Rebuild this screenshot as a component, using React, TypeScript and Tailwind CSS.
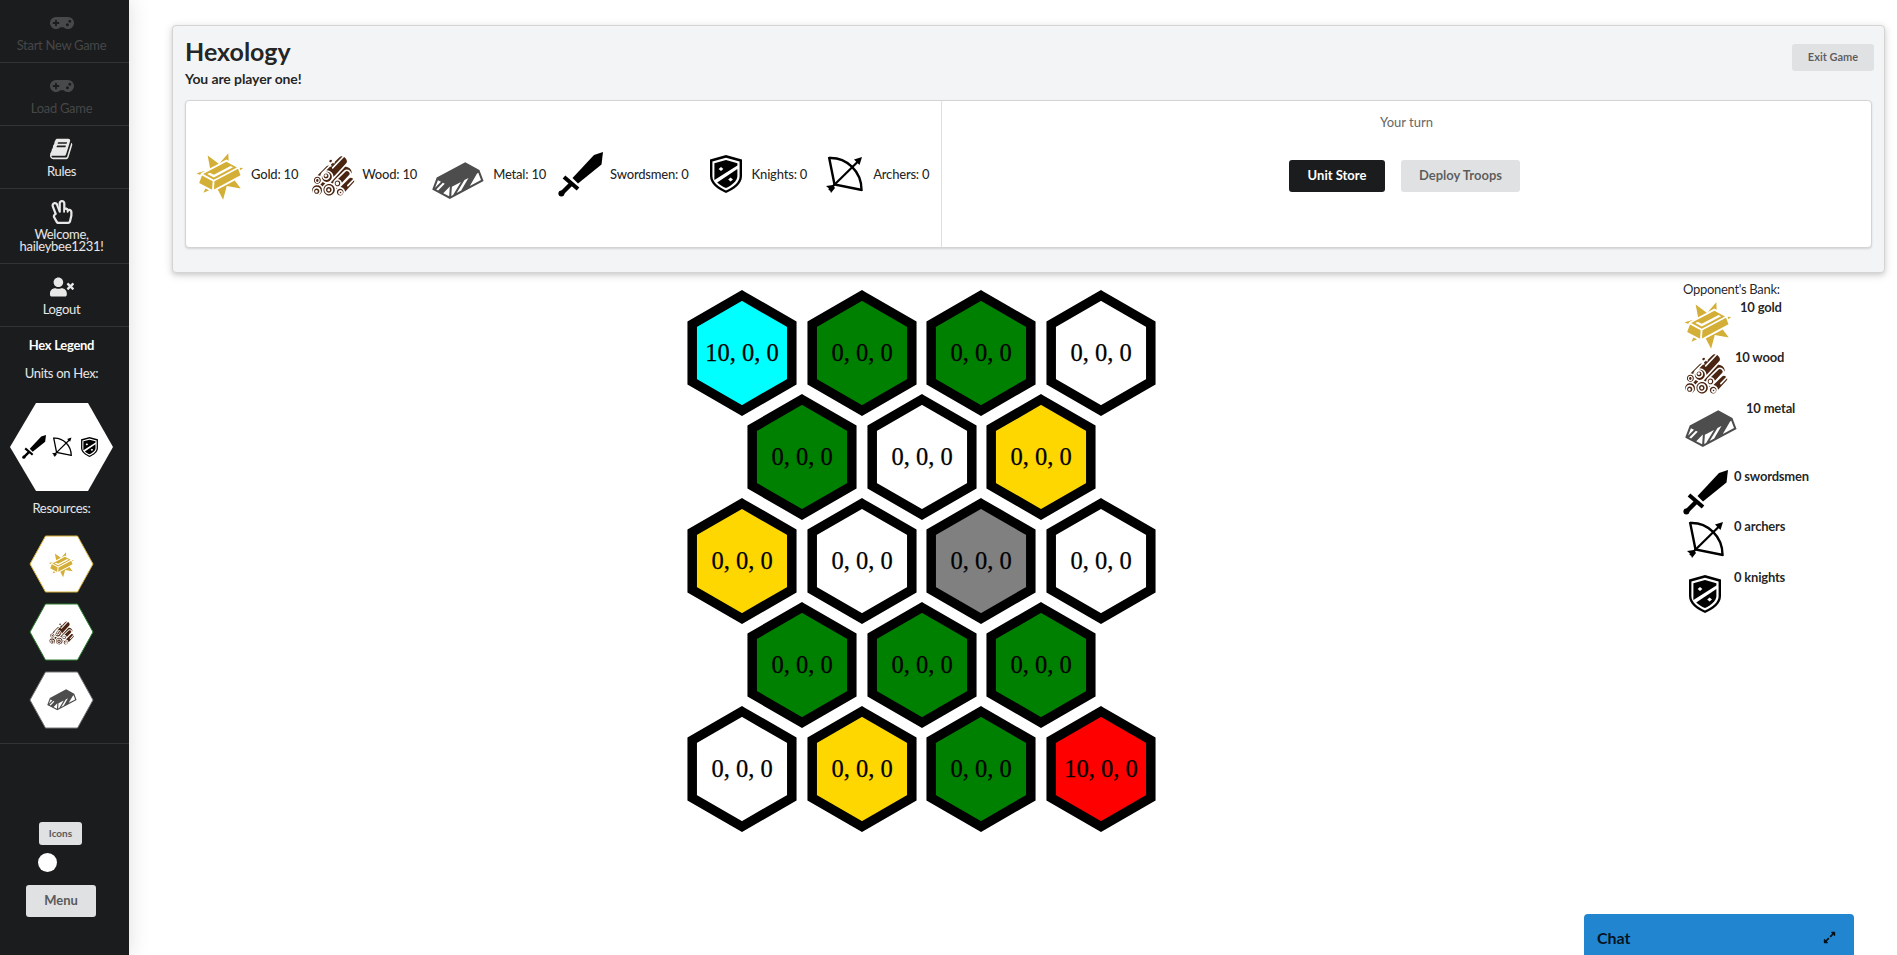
import { FaExpandAlt, FaGamepad, FaRegHandPeace, FaUserTimes } from 'react-icons/fa';
import { GiGoldBar, GiMetalBar, GiWoodPile } from 'react-icons/gi';

const GOLD = '#d4af37';
const WOOD = '#4a2511';
const METAL = '#4d4d4d';

function KnightShield({ className }: { className?: string }) {
  return (
    <svg viewBox="0 0 32 38" className={className}>
      <path d="M16 0 L32 4.5 V21 C32 29 24 34.5 16 38 C8 34.5 0 29 0 21 V4.5 Z" fill="#000" />
      <path d="M16 2.8 L29.6 6.6 V21 C29.6 27.6 23 32.4 16 35.4 C9 32.4 2.4 27.6 2.4 21 V6.6 Z" fill="#fff" />
      <path d="M16 5 L27.4 8.2 V10.6 L4.4 25 C4.2 23.8 4.4 22.4 4.4 21 V8.2 Z" fill="#000" />
      <path d="M27.4 14 V21 C27.4 26 22 30.2 16 33 C12.6 31.5 9.4 29.6 7.2 27.4 Z" fill="#000" />
      <path d="M11 12 L13.4 14 L11 16 L8.6 14 Z" fill="#fff" />
      <path d="M20.6 22.4 L23 24.4 L20.6 26.4 L18.2 24.4 Z" fill="#fff" />
    </svg>
  );
}

function Sword({ className }: { className?: string }) {
  return (
    <svg viewBox="0 0 45 45" className={className}>
      <path d="M45 0 L43.5 12.5 L20 31.5 L14.5 26 L36 3 Z" fill="#000" />
      <path d="M6 25 L20 37" stroke="#000" strokeWidth="4" />
      <path d="M13 32 L4 41" stroke="#000" strokeWidth="4.5" />
      <circle cx="3.4" cy="41.6" r="3" fill="#000" />
    </svg>
  );
}

function Bow({ className }: { className?: string }) {
  return (
    <svg viewBox="0 0 37 37" fill="none" stroke="#000" className={className}>
      <path d="M3 2 C20 1 36 15 35.5 35" strokeWidth="2.4" />
      <path d="M3 1 L8.5 28.5 L36 34" strokeWidth="2.4" />
      <path d="M3 34 L32 5.5" strokeWidth="2.2" />
      <path d="M36 1 L28 3.5 L33.5 9 Z" fill="#000" stroke="none" />
      <path d="M0 30 L7 29 L9 32 L5 37 L3.5 33 Z" fill="#000" stroke="none" />
    </svg>
  );
}

function BookIcon() {
  return (
    <svg viewBox="0 0 1792 1792" fill="currentColor" className="w-[24px] h-[24px]">
      <path d="M1639 478q40 57 18 129l-275 906q-19 64-76.5 107.5t-122.5 43.5h-923q-77 0-148.5-53.5t-99.5-131.5q-24-67-2-127 0-4 3-27t4-37q1-8-3-21.5t-3-19.5q2-11 8-21t16.5-23.5 16.5-23.5q23-38 45-91.5t30-91.5q3-10 .5-30t-.5-28q3-11 17-28t17-23q21-36 42-92t25-90q1-9-2.5-32t.5-28q4-13 22-30.5t22-22.5q19-26 42.5-84.5t27.5-96.5q1-8-3-25.5t-2-26.5q2-8 9-18t18-23 17-21q8-12 16.5-30.5t15-35 16-36 19.5-32 26.5-23.5 36-11.5 47.5 5.5l-1 3q38-9 51-9h761q74 0 114 56t18 130l-274 906q-36 119-71.5 153.5t-128.5 34.5h-869q-27 0-38 15-11 16-1 43 24 70 144 70h923q29 0 56-15.5t35-41.5l300-987q7-22 5-57 38 15 59 43zm-1064 2q-4 13 2 22.5t20 9.5h608q13 0 25.5-9.5t16.5-22.5l21-64q4-13-2-22.5t-20-9.5h-608q-13 0-25.5 9.5t-16.5 22.5zm-83 256q-4 13 2 22.5t20 9.5h608q13 0 25.5-9.5t16.5-22.5l21-64q4-13-2-22.5t-20-9.5h-608q-13 0-25.5 9.5t-16.5 22.5z" />
    </svg>
  );
}

function SideItem({ icon, label, disabled }: { icon: React.ReactNode; label: React.ReactNode; disabled?: boolean }) {
  return (
    <div className={`flex flex-col items-center border-b border-white/10 pt-[11px] pb-[11px] pr-[6px] text-center ${disabled ? 'text-white/20' : 'text-white/90'}`}>
      <div className="h-6 flex items-center text-[24px]">{icon}</div>
      <div className="mt-[4px] text-[13px] leading-[12px] tracking-[-0.3px]">{label}</div>
    </div>
  );
}

function LegendHex({ stroke, children }: { stroke: string; children: React.ReactNode }) {
  return (
    <div className="relative w-[65px] h-[58px] flex items-center justify-center">
      <svg viewBox="0 0 65 58" className="absolute inset-0 w-full h-full">
        <polygon points="16.5,1 48.5,1 64,29 48.5,57 16.5,57 1,29" fill="#fff" stroke={stroke} strokeWidth="1" />
      </svg>
      <div className="relative">{children}</div>
    </div>
  );
}

function Sidebar() {
  return (
    <div className="w-[129px] h-[955px] shrink-0 bg-[#1b1c1d] flex flex-col shadow-[0_0_20px_rgba(34,36,38,0.15)] z-10">
      <SideItem disabled icon={<FaGamepad />} label="Start New Game" />
      <SideItem disabled icon={<FaGamepad />} label="Load Game" />
      <SideItem icon={<BookIcon />} label="Rules" />
      <SideItem icon={<FaRegHandPeace />} label={<>Welcome,<br />haileybee1231!</>} />
      <SideItem icon={<FaUserTimes />} label="Logout" />
      <div className="flex flex-col items-center border-b border-white/10 pb-[14px] pr-[6px] text-white/90 text-[13px] leading-[14px] tracking-[-0.3px]">
        <div className="mt-[11px] font-bold text-white">Hex Legend</div>
        <div className="mt-[14px]">Units on Hex:</div>
        <div className="relative mt-[23px] w-[103px] h-[88px] flex items-center pl-[12px]">
          <svg viewBox="0 0 103 88" className="absolute inset-0 w-full h-full">
            <polygon points="26,0 78,0 103,44 78,88 26,88 0,44" fill="#fff" />
          </svg>
          <Sword className="relative w-[24px] h-[24px]" />
          <Bow className="relative ml-[6px] w-[20px] h-[20px]" />
          <KnightShield className="relative ml-[9px] w-[17px] h-[20px]" />
        </div>
        <div className="mt-[10px]">Resources:</div>
        <div className="mt-[20px] flex flex-col gap-[10px]">
          <LegendHex stroke="#d4af37"><GiGoldBar size={27} color={GOLD} /></LegendHex>
          <LegendHex stroke="#2e7d32"><GiWoodPile size={27} color={WOOD} /></LegendHex>
          <LegendHex stroke="#777777"><GiMetalBar size={32} color={METAL} /></LegendHex>
        </div>
      </div>
      <div className="flex flex-col items-center mt-[78px] pr-[6px]">
        <button className="w-[43px] h-[23px] rounded-[3px] bg-[#e0e1e2] text-[#5a5a5a] text-[10px] font-bold mr-[2px]">Icons</button>
        <div className="mt-[8px] w-[19px] h-[19px] rounded-full bg-white mr-[28px]" />
        <button className="mt-[13px] mr-[1px] w-[70px] h-[32px] rounded-[3px] bg-[#e0e1e2] text-[#5a5a5a] text-[13px] font-bold">Menu</button>
      </div>
    </div>
  );
}

const stats = [
  { icon: <GiGoldBar size={50} color={GOLD} className="mt-[4px]" />, item: 'mr-[12px]', label: 'ml-[6px]', text: 'Gold: 10' },
  { icon: <GiWoodPile size={46} color={WOOD} className="mt-[2px]" />, item: 'mr-[13px]', label: 'ml-[6px]', text: 'Wood: 10' },
  { icon: <GiMetalBar size={56} color={METAL} className="mt-[14px]" />, item: 'mr-[12px]', label: 'ml-[7px]', text: 'Metal: 10' },
  { icon: <Sword className="w-[45px] h-[45px]" />, item: 'mr-[21px]', label: 'ml-[7px]', text: 'Swordsmen: 0' },
  { icon: <KnightShield className="w-[32px] h-[38px]" />, item: 'mr-[19px]', label: 'ml-[10px]', text: 'Knights: 0' },
  { icon: <Bow className="w-[37px] h-[37px]" />, item: '', label: 'ml-[10px]', text: 'Archers: 0' },
];

function GamePanel() {
  return (
    <div className="mt-[25px] ml-[43px] mr-[12px] h-[248px] rounded-[4px] border border-[#d4d4d5] bg-[#f3f4f5] pl-[12px] pr-[10px] pt-[13px] shadow-[0_2px_4px_rgba(34,36,38,0.12),0_2px_10px_rgba(34,36,38,0.15)]">
      <div className="flex items-start justify-between">
        <div>
          <h2 className="text-[25px] leading-[24px] font-bold text-[rgba(0,0,0,0.87)]">Hexology</h2>
          <p className="mt-[9px] text-[14px] leading-[14px] font-bold tracking-[-0.1px] text-[rgba(0,0,0,0.87)]">You are player one!</p>
        </div>
        <button className="mt-[5px] w-[82px] h-[27px] rounded-[3px] bg-[#e0e1e2] text-[rgba(0,0,0,0.6)] text-[11px] font-bold">Exit Game</button>
      </div>
      <div className="mt-[14px] mr-[2px] h-[148px] flex rounded-[4px] border border-[#d4d4d5] bg-white shadow-[0_1px_2px_rgba(34,36,38,0.15)]">
        <div className="w-[756px] flex items-center pl-[9px] border-r border-[#dedede]">
          {stats.map((s) => (
            <div key={s.text} className={`flex items-center ${s.item}`}>
              {s.icon}
              <span className={`${s.label} mt-[2px] text-[13px] font-medium tracking-[-0.2px] text-[rgba(0,0,0,0.87)] whitespace-nowrap`}>{s.text}</span>
            </div>
          ))}
        </div>
        <div className="flex-1 flex flex-col items-center pt-[14px]">
          <div className="text-[13px] leading-[14px] font-medium text-[rgba(0,0,0,0.6)]">Your turn</div>
          <div className="mt-[31px] mr-[4px] flex gap-[16px]">
            <button className="w-[96px] h-[32px] rounded-[3px] bg-[#1b1c1d] text-white text-[13px] font-bold">Unit Store</button>
            <button className="w-[119px] h-[32px] rounded-[3px] bg-[#e0e1e2] text-[rgba(0,0,0,0.6)] text-[13px] font-bold">Deploy Troops</button>
          </div>
        </div>
      </div>
    </div>
  );
}

const rows: { fill: string; text: string }[][] = [
  [
    { fill: '#00ffff', text: '10, 0, 0' },
    { fill: '#008000', text: '0, 0, 0' },
    { fill: '#008000', text: '0, 0, 0' },
    { fill: '#ffffff', text: '0, 0, 0' },
  ],
  [
    { fill: '#008000', text: '0, 0, 0' },
    { fill: '#ffffff', text: '0, 0, 0' },
    { fill: '#ffd700', text: '0, 0, 0' },
  ],
  [
    { fill: '#ffd700', text: '0, 0, 0' },
    { fill: '#ffffff', text: '0, 0, 0' },
    { fill: '#808080', text: '0, 0, 0' },
    { fill: '#ffffff', text: '0, 0, 0' },
  ],
  [
    { fill: '#008000', text: '0, 0, 0' },
    { fill: '#008000', text: '0, 0, 0' },
    { fill: '#008000', text: '0, 0, 0' },
  ],
  [
    { fill: '#ffffff', text: '0, 0, 0' },
    { fill: '#ffd700', text: '0, 0, 0' },
    { fill: '#008000', text: '0, 0, 0' },
    { fill: '#ff0000', text: '10, 0, 0' },
  ],
];

function Hex({ fill, text }: { fill: string; text: string }) {
  return (
    <svg viewBox="0 0 110 126" className="w-[110px] h-[126px]">
      <polygon points="55,5.5 104.8,34.25 104.8,91.75 55,120.5 5.2,91.75 5.2,34.25" fill={fill} stroke="#000" strokeWidth="9.5" />
      <text x="55" y="71" textAnchor="middle" fontSize="24.5" fontFamily="'Liberation Serif', serif" fill="#000" stroke="#000" strokeWidth="0.25">{text}</text>
    </svg>
  );
}

function Board() {
  return (
    <div className="ml-[558px] w-[470px] flex flex-col">
      {rows.map((row, i) => (
        <div key={i} className={`flex gap-[9.5px] ${i % 2 ? 'ml-[60px]' : ''} ${i ? '-mt-[22px]' : ''}`}>
          {row.map((h, j) => <Hex key={j} {...h} />)}
        </div>
      ))}
    </div>
  );
}

function BankRow({ icon, text, textMl, h }: { icon: React.ReactNode; text: string; textMl: string; h: string }) {
  return (
    <div className={`flex items-start ${h}`}>
      {icon}
      <span className={`${textMl} text-[13px] leading-[14px] font-bold tracking-[-0.2px] text-[rgba(0,0,0,0.87)] whitespace-nowrap`}>{text}</span>
    </div>
  );
}

function OpponentBank() {
  return (
    <div className="ml-[526px] -mt-[8px] text-[rgba(0,0,0,0.87)]">
      <div className="text-[13px] leading-[14px] tracking-[-0.3px]">Opponent's Bank:</div>
      <BankRow h="h-[50px] mt-[4px]" textMl="ml-[7px]" icon={<GiGoldBar size={50} color={GOLD} />} text="10 gold" />
      <BankRow h="h-[51px]" textMl="ml-[6px]" icon={<GiWoodPile size={46} color={WOOD} />} text="10 wood" />
      <BankRow h="h-[68px]" textMl="ml-[7px]" icon={<GiMetalBar size={56} color={METAL} />} text="10 metal" />
      <BankRow h="h-[50px]" textMl="ml-[6px]" icon={<Sword className="w-[45px] h-[45px] mt-[1px]" />} text="0 swordsmen" />
      <BankRow h="h-[51px]" textMl="ml-[10px]" icon={<Bow className="w-[37px] h-[37px] ml-[4px] mt-[2px]" />} text="0 archers" />
      <BankRow h="h-[43px]" textMl="ml-[13px]" icon={<KnightShield className="w-[32px] h-[38px] ml-[6px] mt-[5px]" />} text="0 knights" />
    </div>
  );
}

export default function App() {
  return (
    <div className="relative flex h-[955px] overflow-hidden bg-white font-['Lato',sans-serif]">
      <Sidebar />
      <div className="flex-1 min-w-0">
        <GamePanel />
        <div className="flex mt-[17px]">
          <Board />
          <OpponentBank />
        </div>
      </div>
      <div className="absolute right-[43px] bottom-0 w-[270px] h-[41px] rounded-t-[4px] bg-[#2185d0] flex items-start justify-between pl-[13px] pr-[18px] pt-[14px]">
        <span className="text-[16px] leading-[20px] font-bold text-[rgba(0,0,0,0.87)]">Chat</span>
        <FaExpandAlt className="mt-[3px] text-[rgba(0,0,0,0.87)]" size={13} />
      </div>
    </div>
  );
}
